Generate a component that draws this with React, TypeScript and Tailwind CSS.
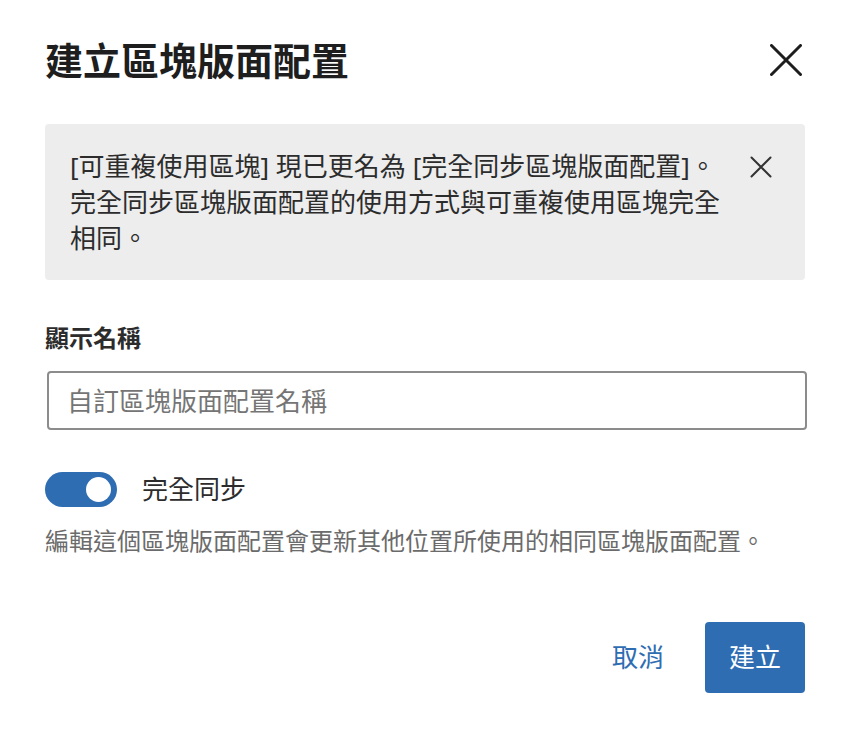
import { useState } from "react";

const font = {
  fontFamily: '"Noto Sans", "Noto Sans CJK TC", sans-serif',
};

function CloseIcon({ size, stroke }: { size: number; stroke: number }) {
  return (
    <svg width={size} height={size} viewBox={`0 0 ${size} ${size}`} fill="none">
      <path
        d={`M1.5 1.5 L${size - 1.5} ${size - 1.5} M${size - 1.5} 1.5 L1.5 ${size - 1.5}`}
        stroke="currentColor"
        strokeWidth={stroke}
        strokeLinecap="round"
      />
    </svg>
  );
}

export default function App() {
  const [name, setName] = useState("");
  const [synced, setSynced] = useState(true);
  const [notice, setNotice] = useState(true);

  return (
    <div className="h-[730px] w-[848px] bg-white pl-[45px] pr-[43px]" style={font}>
      {/* header */}
      <div className="flex items-center justify-between pt-[36px]">
        <h1 className="text-[38px] font-bold leading-[48px] text-[#1e1e1e]">建立區塊版面配置</h1>
        <button aria-label="關閉" className="mr-[3px] text-[#1e1e1e]">
          <CloseIcon size={32} stroke={3} />
        </button>
      </div>

      {/* notice */}
      {notice && (
        <div className="mt-[40px] flex rounded-[4px] bg-[#ededed] py-[24px] pl-[25px] pr-[33px]">
          <p className="whitespace-nowrap text-[26px] leading-[36px] text-[#2c2c2c]">
            [可重複使用區塊] 現已更名為 [完全同步區塊版面配置]。
            <br />
            完全同步區塊版面配置的使用方式與可重複使用區塊完全
            <br />
            相同。
          </p>
          <button
            aria-label="關閉通知"
            onClick={() => setNotice(false)}
            className="ml-auto mt-[8px] self-start text-[#333]"
          >
            <CloseIcon size={22} stroke={2} />
          </button>
        </div>
      )}

      {/* name field */}
      <label className="mt-[42px] block text-[24px] font-bold leading-[32px] text-[#2c2c2c]">顯示名稱</label>
      <input
        value={name}
        onChange={(e) => setName(e.target.value)}
        placeholder="自訂區塊版面配置名稱"
        className="mt-[17px] ml-[2px] block h-[59px] w-[760px] rounded-[4px] border-2 border-[#8c8c8c] pl-[18px] text-[26px] text-[#2c2c2c] outline-none placeholder:text-[#757575]"
      />

      {/* sync toggle */}
      <div className="mt-[41px] flex items-center gap-[25px]">
        <button
          role="switch"
          aria-checked={synced}
          onClick={() => setSynced(!synced)}
          className={`flex h-[35px] w-[72px] items-center rounded-full px-[6px] ${
            synced ? "justify-end bg-[#2f6db3]" : "justify-start bg-[#8c8c8c]"
          }`}
        >
          <span className="h-[25px] w-[25px] rounded-full bg-white" />
        </button>
        <span className="text-[26px] leading-[36px] text-[#2c2c2c]">完全同步</span>
      </div>
      <p className="mt-[18px] text-[24px] leading-[32px] text-[#6b6b6b]">
        編輯這個區塊版面配置會更新其他位置所使用的相同區塊版面配置。
      </p>

      {/* actions */}
      <div className="mt-[65px] flex items-center justify-end gap-[25px]">
        <button className="px-[16px] text-[26px] leading-[71px] text-[#2f6db3]">取消</button>
        <button className="h-[71px] w-[100px] rounded-[4px] bg-[#2f6db3] text-[26px] text-white">建立</button>
      </div>
    </div>
  );
}
